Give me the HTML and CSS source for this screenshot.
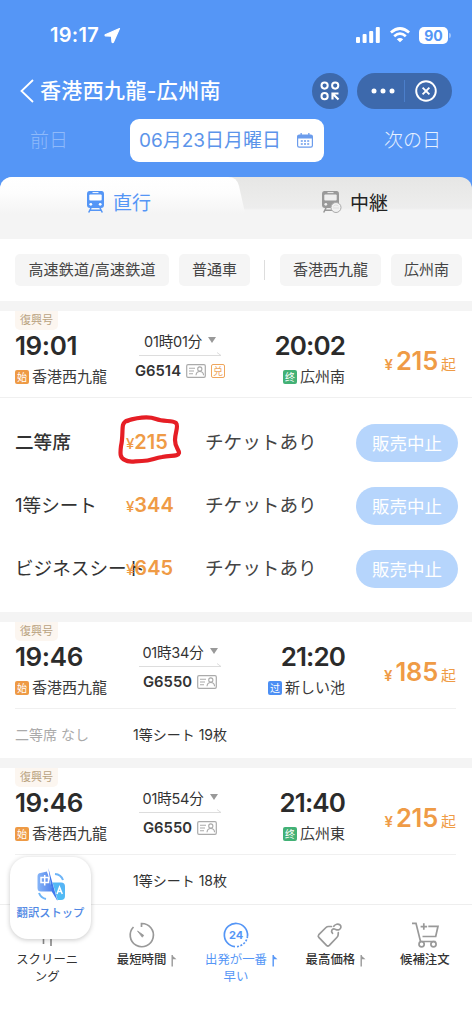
FILE: index.html
```html
<!DOCTYPE html>
<html lang="ja">
<head>
<meta charset="utf-8">
<title>香港西九龍-広州南</title>
<link rel="stylesheet" href="styles.css">
</head>
<body>
<svg width="0" height="0" class="defs">
  <symbol id="idcard" viewBox="0 0 20 14"><rect x=".7" y=".7" width="18.6" height="12.6" rx="1.3" fill="none" stroke="#aaa" stroke-width="1.2"/><path d="M3 4.2h6M3 7h5M3 9.8h4" stroke="#aaa" stroke-width="1.1"/><circle cx="13.8" cy="5" r="2.1" fill="none" stroke="#aaa" stroke-width="1.1"/><path d="M10 11.2c.3-2.6 1.6-3.7 3.8-3.7s3.500 1.1 3.800 3.700" fill="none" stroke="#aaa" stroke-width="1.1"/></symbol>
  <symbol id="up" viewBox="0 0 6 12"><path d="M1.200 0v11.500" stroke="currentColor" stroke-width="1.400"/><path d="M1.200 .5 5.500 4.300H1.200z" fill="currentColor"/></symbol>
</svg>
<div class="screen">
  <header class="top">
    <div class="status">
      <span class="clock">19:17</span>
      <svg class="loc" width="17" height="17" viewBox="0 0 17 17"><path d="M15.500 1.500 1.200 7.800Q.8 8.600 1.600 8.800L7.500 9.200 8 15.200Q8.800 16 9.400 15.200z" fill="#fff" stroke="#fff" stroke-width="1.200" stroke-linejoin="round"/></svg>
      <svg class="signal" width="24" height="16" viewBox="0 0 24 16" fill="#fff"><rect x="0" y="10" width="4" height="6" rx="1"/><rect x="6.6" y="7" width="4" height="9" rx="1"/><rect x="13.2" y="4" width="4" height="12" rx="1"/><rect x="19.8" y="0" width="4" height="16" rx="1"/></svg>
      <svg class="wifi" width="20" height="16" viewBox="0 0 20 16" fill="none" stroke="#fff" stroke-width="2.7"><path d="M.9 5.500Q10-2.500 19.100 5.500M4.200 9.200Q10 4 15.800 9.200"/><path d="m6.800 12.200 3.200 3 3.200-3q-3.200-2.600-6.400 0z" fill="#fff" stroke="none"/></svg>
      <span class="battery">90</span><i class="cap"></i>
    </div>
    <div class="nav">
      <svg width="14" height="24" viewBox="0 0 14 24" fill="none" stroke="#fff" stroke-width="1.8"><path d="M13 1 1.500 12 13 23"/></svg>
      <h1 class="title">香港西九龍-広州南</h1>
      <div class="round"><svg width="20" height="20" viewBox="0 0 20 20" fill="none" stroke="#fff" stroke-width="2"><circle cx="4.600" cy="4.600" r="3.100"/><circle cx="15.200" cy="4.600" r="3.100"/><circle cx="4.600" cy="15.200" r="3.100"/><path d="M18.500 18.500 13 13M12.500 18.500v-6h6" stroke-width="2.200"/></svg></div>
      <div class="capsule">
        <svg width="24" height="6" viewBox="0 0 24 6" fill="#fff"><circle cx="3" cy="3" r="2.500"/><circle cx="12" cy="3" r="2.500"/><circle cx="21" cy="3" r="2.500"/></svg>
        <i class="bar"></i>
        <svg width="22" height="22" viewBox="0 0 22 22" fill="none" stroke="#fff" stroke-width="1.9"><circle cx="11" cy="11" r="9.800"/><path d="m7.600 7.600 6.800 6.800m0-6.800-6.800 6.800"/></svg>
      </div>
    </div>
    <div class="dates">
      <span class="prev">前日</span>
      <div class="picker"><span>06月23日月曜日</span>
        <svg width="16" height="15" viewBox="0 0 16 15"><rect x=".6" y="2" width="14.8" height="12.2" rx="1.6" fill="none" stroke="#6b9cec" stroke-width="1.2"/><path d="M1 2h14v3.500H1zM3.500 0h1.300v3H3.500zM11.200 0h1.300v3h-1.300z" fill="#6b9cec"/><path d="M3.800 8h8.400M3.800 11h8.400" stroke="#6b9cec" stroke-width="1.500" stroke-dasharray="2 1.200"/></svg>
      </div>
      <span class="next">次の日</span>
    </div>
  </header>

  <nav class="tabs">
    <svg class="tabshape" width="245" height="62" viewBox="0 0 245 62"><defs><linearGradient id="g" x2="0" y2="1"><stop offset="0" stop-color="#fff"/><stop offset=".25" stop-color="#fdfdfd"/><stop offset=".6" stop-color="#f4f4f4"/></linearGradient></defs><path d="M0 0h228q9 0 11 9l6 27v26H0z" fill="url(#g)"/></svg>
    <div class="tab on">
      <svg width="19" height="22" viewBox="0 0 19 22"><path d="M3.500 0h12Q18 0 18 3v11q0 3-3 3H4q-3 0-3-3V3q0-3 2.500-3z" fill="#5596f6"/><rect x="3.300" y="3.500" width="12.400" height="6" rx="1" fill="#fff"/><path d="M6.500 1.600h6" stroke="#fff" stroke-width="1"/><circle cx="4.800" cy="13.300" r="1.400" fill="#fff"/><circle cx="14.200" cy="13.300" r="1.400" fill="#fff"/><path d="m5 17-2.300 4.500M14 17l2.300 4.500M4 19.300h11" stroke="#5596f6" stroke-width="1.600"/></svg>
      <span>直行</span>
    </div>
    <div class="tab">
      <svg width="21" height="22" viewBox="0 0 21 22"><path d="M3.500 0h12Q18 0 18 3v11q0 3-3 3H4q-3 0-3-3V3q0-3 2.500-3z" fill="#999"/><rect x="3.300" y="3.500" width="12.400" height="6" rx="1" fill="#eee"/><path d="M6.500 1.600h6" stroke="#eee"/><circle cx="4.800" cy="13.300" r="1.400" fill="#eee"/><path d="m5 17-2.300 4.500M4 19.300h8" stroke="#999" stroke-width="1.600"/><circle cx="15" cy="16.500" r="5" fill="#f1f1f1" stroke="#aaa"/><path d="M12 17h6M12.300 15.500a3.200 3.200 0 0 1 5-.5" stroke="#ddd" fill="none"/></svg>
      <span>中継</span>
    </div>
  </nav>

  <div class="filters">
    <span class="chip c1">高速鉄道/高速鉄道</span><span class="chip c2">普通車</span><i class="vr"></i><span class="chip c3">香港西九龍</span><span class="chip c2">広州南</span>
  </div>

  <main>
    <article class="train">
      <div class="head">
        <div class="from"><span class="kind">復興号</span><b class="time">19:01</b><div class="station"><i class="mark start">始</i>香港西九龍</div></div>
        <div class="mid"><div class="dur"><span>01時01分</span><i class="tri"></i></div><svg class="rule" width="83" height="5" viewBox="0 0 83 5"><path d="M0 3.500h82M78 .5l4 3" stroke="#ddd" fill="none"/></svg><div class="no"><b>G6514</b><svg width="20" height="14"><use href="#idcard"/></svg><i class="swap">兑</i></div></div>
        <div class="to"><b class="time">20:02</b><div class="station"><i class="mark end">终</i>広州南</div></div>
        <div class="price"><small>¥</small><b>215</b><span>起</span></div>
      </div>
      <div class="seats">
        <div class="seat"><span class="name strong">二等席</span><span class="fare"><small>¥</small>215</span><span class="avail">チケットあり</span><button class="stop">販売中止</button>
          <svg class="ring" width="66" height="50" viewBox="117 415 66 50"><path d="M126 421C136 418 148 416 156 419C164 422 172 420 176 423C179 426 175 432 175 440C175 448 179 449 179 453C178 457 171 455 162 457C154 458 151 461 142 461C134 461 129 463 125 460C120 458 120 454 121 446C123 438 122 429 123 425Q124 421 128 421" fill="none" stroke="#e61e25" stroke-width="4.200" stroke-linecap="round" stroke-linejoin="round"/></svg></div>
        <div class="seat"><span class="name">1等シート</span><span class="fare"><small>¥</small>344</span><span class="avail">チケットあり</span><button class="stop">販売中止</button></div>
        <div class="seat"><span class="name">ビジネスシート</span><span class="fare"><small>¥</small>645</span><span class="avail">チケットあり</span><button class="stop">販売中止</button></div>
      </div>
    </article>

    <article class="train">
      <div class="head inset">
        <div class="from"><span class="kind">復興号</span><b class="time">19:46</b><div class="station"><i class="mark start">始</i>香港西九龍</div></div>
        <div class="mid"><div class="dur"><span>01時34分</span><i class="tri"></i></div><svg class="rule" width="83" height="5" viewBox="0 0 83 5"><path d="M0 3.500h82M78 .5l4 3" stroke="#ddd" fill="none"/></svg><div class="no"><b>G6550</b><svg width="20" height="14"><use href="#idcard"/></svg></div></div>
        <div class="to"><b class="time">21:20</b><div class="station"><i class="mark via">过</i>新しい池</div></div>
        <div class="price"><small>¥</small><b>185</b><span>起</span></div>
      </div>
      <div class="summary"><span class="none">二等席 なし</span><span>1等シート 19枚</span></div>
    </article>

    <article class="train">
      <div class="head inset">
        <div class="from"><span class="kind">復興号</span><b class="time">19:46</b><div class="station"><i class="mark start">始</i>香港西九龍</div></div>
        <div class="mid"><div class="dur"><span>01時54分</span><i class="tri"></i></div><svg class="rule" width="83" height="5" viewBox="0 0 83 5"><path d="M0 3.500h82M78 .5l4 3" stroke="#ddd" fill="none"/></svg><div class="no"><b>G6550</b><svg width="20" height="14"><use href="#idcard"/></svg></div></div>
        <div class="to"><b class="time">21:40</b><div class="station"><i class="mark end">终</i>広州東</div></div>
        <div class="price"><small>¥</small><b>215</b><span>起</span></div>
      </div>
      <div class="summary"><span></span><span>1等シート 18枚</span></div>
    </article>
  </main>

  <footer class="sort">
    <div class="item"><svg width="28" height="28" viewBox="0 0 28 28" fill="none" stroke="#888" stroke-width="1.600"><path d="M3 3h22l-7 9v13M3 3l7.500 9v11"/></svg><span>スクリーニ<br>ング</span></div>
    <div class="item bold"><svg width="28" height="28" viewBox="0 0 28 28" fill="none" stroke="#999" stroke-width="1.700"><path d="M13.500 6V2.500A11.600 11.600 0 1 1 5.500 6"/><path d="m9.500 10 6.200 4.300-1.400 1.900z" fill="#999" stroke-width=".8"/></svg><span>最短時間<svg class="up" width="6" height="12"><use href="#up"/></svg></span></div>
    <div class="item on"><svg width="28" height="28" viewBox="0 0 28 28"><path d="M25.500 15A11.600 11.600 0 1 0 13 25.600" fill="none" stroke="#5596f6" stroke-width="1.700"/><path d="M15 25.600A11.600 11.600 0 0 0 25.500 15" fill="none" stroke="#5596f6" stroke-width="1.700" stroke-dasharray="2 1.500"/><text x="14" y="18" text-anchor="middle" class="n24">24</text></svg><span>出発が一番<svg class="up" width="6" height="12"><use href="#up"/></svg><br>早い</span></div>
    <div class="item bold"><svg width="28" height="28" viewBox="0 0 28 28" fill="none" stroke="#999" stroke-width="1.700" stroke-linejoin="round" stroke-linecap="round"><path d="M15.500 5.500h-3Q11 5.500 10 6.500L2.800 13.700q-1.200 1.400 0 2.700l7.700 8q1.400 1.200 2.800 0l7.500-7.900q1.300-1.300 1.300-2.500l.2-2.300"/><path d="M16.500 12.300c-2-2.200-.4-4.800 2-4.300 1.500.4 2.500 1.500 4.500.7 2.400-1.100 2.500-3.700.8-5-1.800-1.200-4.600-.6-6 1.600"/></svg><span>最高価格<svg class="up" width="6" height="12"><use href="#up"/></svg></span></div>
    <div class="item bold"><svg width="30" height="28" viewBox="0 0 30 28" fill="none" stroke="#999" stroke-width="1.700"><path d="M2 2.300h4l4.500 18.200h15M18.300 5.300H28l-2.300 10.200H12.500M13.800 2.300v6.500M10.600 5.600h6.500"/><circle cx="11.600" cy="23.300" r="2.600" fill="#fff"/><circle cx="23.500" cy="23.300" r="2.600" fill="#fff"/></svg><span>候補注文</span></div>
  </footer>

  <div class="float">
    <svg width="30" height="34" viewBox="0 0 30 34"><defs><linearGradient id="b1" x2="1"><stop stop-color="#86b5f8"/><stop offset="1" stop-color="#4777e8"/></linearGradient><linearGradient id="b2" y1="1" x2="1" y2="0"><stop stop-color="#4ac3f4"/><stop offset="1" stop-color="#58b2f5"/></linearGradient></defs><path d="M4.500 5 11 3.500l9 20H5q-3.500 0-3.500-3.500V8.500Q1.500 5 4.500 5z" fill="url(#b1)"/><path d="M14 14.500h11q4 0 4 4V28q0 4-4 4h-5z" fill="url(#b2)"/><path d="m11.500 1 9 31" stroke="#fff" stroke-width="2.200"/><path d="m12.300 0 9.200 33-5.500-9z" fill="#3f79ee"/><path d="M5 9.500h7.500v5H5zM8.700 7v10.500" stroke="#fff" stroke-width="1.500" fill="none"/><path d="m21 26 2.500-7 2.800 7M22 23.500h3.600" stroke="#fff" stroke-width="1.500" fill="none"/><path d="M19 6q6 .5 8 6M3 25q2 5 7 6" stroke="#6eb5f7" stroke-width="2" fill="none"/></svg>
    <span>翻訳ストップ</span>
  </div>
</div>
</body>
</html>
```

FILE: styles.css
```css
* { box-sizing: border-box; }
body { margin: 0; background: #fff; font-family: Inter, "Noto Sans CJK JP", sans-serif; color: #333; }
i { font-style: normal; }
svg { display: block; flex: none; }
.defs { position: absolute; }
.screen { position: relative; width: 472px; height: 1024px; overflow: hidden; display: flex; flex-direction: column; white-space: nowrap; }

/* header */
.top { flex: none; height: 189px; margin-bottom: -12px; background: #5596f6; color: #fff; }
.status { display: flex; align-items: center; height: 37px; padding: 17px 0 0 50px; margin-top: 8px; }
.clock { font-size: 20px; font-weight: 600; width: 52px; line-height: 20px; letter-spacing: .3px; }
.loc { margin-left: 2px; }
.signal { margin-left: 235px; width: 24px; }
.wifi { margin-left: 10px; }
.battery { margin-left: 9px; width: 29px; height: 17px; border-radius: 5px; background: #fff; color: #5596f6; font-size: 14px; font-weight: 700; line-height: 17px; text-align: center; }
.cap { width: 2px; height: 5px; margin-left: 1px; border-radius: 0 2px 2px 0; background: #9bc1fa; }
.nav { display: flex; align-items: center; height: 36px; margin-top: 28px; padding-left: 20px; }
.title { margin: 0 0 0 6px; width: 272px; font-size: 21px; font-weight: 500; line-height: 30px; letter-spacing: .35px; }
.round { width: 36px; height: 36px; border-radius: 50%; background: #3d69ac; display: grid; place-items: center; }
.capsule { margin-left: 9px; width: 95px; height: 36px; border-radius: 18px; background: #3d69ac; display: flex; align-items: center; padding-left: 14px; }
.bar { width: 1px; height: 22px; margin: 0 10px 0 9px; background: #4b7fcb; }
.dates { display: flex; align-items: center; height: 42px; margin-top: 10px; padding: 0 31px 0 30px; justify-content: space-between; font-size: 19px; }
.dates span { padding-bottom: 3px; }
.prev { width: 100px; color: #8fbafa; font-weight: 300; }
.picker { width: 194px; height: 43px; border-radius: 9px; background: #fff; color: #5c94ea; display: flex; align-items: center; justify-content: space-between; padding: 0 11px 0 9px; }
.next { flex: 1; text-align: right; color: #e6f0ff; font-weight: 300; }

/* tabs */
.tabs { position: relative; display: flex; height: 62px; background: linear-gradient(#e6e6e5 0, #ebebea 20px, #ededed 31px, #f4f4f4 33px); border-radius: 12px 12px 0 0; overflow: hidden; }
.tabshape { position: absolute; inset: 0 auto auto 0; }
.tab { position: relative; width: 236px; height: 50px; display: flex; align-items: center; justify-content: center; gap: 8px; padding-left: 1px; font-size: 19px; color: #222; }
.tab span { padding-bottom: 2px; }
.tab.on { color: #5596f6; }

/* filters */
.filters { display: flex; align-items: center; height: 62px; padding-left: 15px; }
.chip { height: 32px; border-radius: 5px; background: #f5f5f5; font-size: 15px; line-height: 32px; text-align: center; color: #444; margin-right: 10px; }
.c1 { width: 154px; letter-spacing: .2px; }
.c2 { width: 71px; }
.c3 { width: 101px; }
.vr { width: 1px; height: 20px; background: #ddd; margin: 0 15px 0 4px; }

/* train cards */
.train { border-top: 10px solid #f4f4f4; }
.head { display: grid; grid-template-columns: 115px 100px 115px 111px; height: 87px; padding: 0 16px 0 15px; border-bottom: 1px solid #f0f0f0; }
.head.inset { margin: 0 16px 0 15px; padding: 0; }
.kind { display: block; width: 43px; height: 19px; border-radius: 0 0 5px 5px; background: #fcf6f0; color: #b9a27f; font-size: 11px; line-height: 18px; text-align: center; }
.time { display: block; height: 26px; margin-top: 3px; font-size: 26px; font-weight: 600; line-height: 26px; letter-spacing: -.4px; color: #2b2b2b; }
.station { display: flex; align-items: center; gap: 3px; height: 20px; margin-top: 8px; font-size: 15px; line-height: 20px; color: #3a3a3a; }
.mark { width: 14px; height: 14px; border-radius: 2px; color: #fff; font: 10px/14px "Noto Sans CJK SC", sans-serif; text-align: center; }
.start { background: #ee9a45; }
.end { background: #43b176; }
.via { background: #4c8ff4; }
.mid { padding-top: 19px; display: flex; flex-direction: column; align-items: center; }
.dur { display: flex; align-items: center; gap: 6px; height: 20px; font-size: 14.500px; }
.dur span { letter-spacing: -.2px; }
.tri { border: 4px solid transparent; border-top: 6px solid #999; border-bottom: 0; }
.rule { margin-top: 2px; }
.no { display: flex; align-items: center; gap: 5px; height: 20px; margin-top: 4px; font-size: 14.800px; }
.no b { font-weight: 600; }
.swap { width: 14px; height: 14px; border: 1px solid #efa65c; border-radius: 2px; color: #efa65c; font: 10px/12px "Noto Sans CJK SC", sans-serif; text-align: center; }
.to { padding-top: 19px; text-align: right; }
.to .time { letter-spacing: -.9px; }
.to .station { justify-content: flex-end; }
.price { display: flex; justify-content: flex-end; align-items: baseline; padding-top: 35px; color: #ef9b46; line-height: 30px; height: 70px; }
.price small { font-size: 15px; font-weight: 600; margin-right: 3px; }
.price b { font-size: 25.500px; font-weight: 600; letter-spacing: -.2px; }
.price span { font-size: 15px; margin-left: 3px; }
.seats { height: 214px; padding: 13px 15px 0; }
.seat { position: relative; display: grid; grid-template-columns: 111px 79px 151px 102px; align-items: center; height: 63px; font-size: 18.600px; line-height: 30px; }
.seat > span { padding-bottom: 2px; }
.name.strong { font-weight: 500; }
.seat .fare { position: relative; padding: 0; color: #ef9b46; font-size: 20px; font-weight: 600; }
.fare small { font-size: 15px; font-weight: 500; }
.avail { color: #444; }
.stop { width: 102px; height: 38px; padding: 0; border: 0; border-radius: 19px; background: #b6d5fc; color: #fff; font: 17.500px/38px "Noto Sans CJK JP", sans-serif; }
.ring { position: absolute; left: 102px; top: 4px; }
.summary { display: grid; grid-template-columns: 118px 1fr; align-items: center; height: 49px; padding-left: 15px; font-size: 14px; }
.none { color: #aaa; }

/* sort bar */
.sort { position: absolute; left: 0; right: 0; top: 904px; height: 120px; border-top: 1px solid #eee; background: #fff; display: grid; grid-template-columns: repeat(5, 1fr); padding-top: 16px; }
.item { display: flex; flex-direction: column; align-items: center; font-size: 12.400px; line-height: 16.500px; text-align: center; color: #333; }
.item > span { position: relative; margin-top: 3px; }
.bold { font-weight: 500; }
.item.on { color: #5596f6; }
.up { position: absolute; right: -11px; top: 3px; color: #999; }
.on .up { color: #5596f6; }
.n24 { font: 700 11px Inter, sans-serif; fill: #5596f6; }

.float { position: absolute; left: 10px; top: 857px; width: 81px; height: 82px; border-radius: 18px; background: #fff; box-shadow: 0 1px 5px rgba(0,0,0,.22); display: flex; flex-direction: column; align-items: center; padding-top: 11px; color: #4f87e4; font-size: 11.300px; font-weight: 500; line-height: 18px; }
.float span { margin-top: 2px; }
```
